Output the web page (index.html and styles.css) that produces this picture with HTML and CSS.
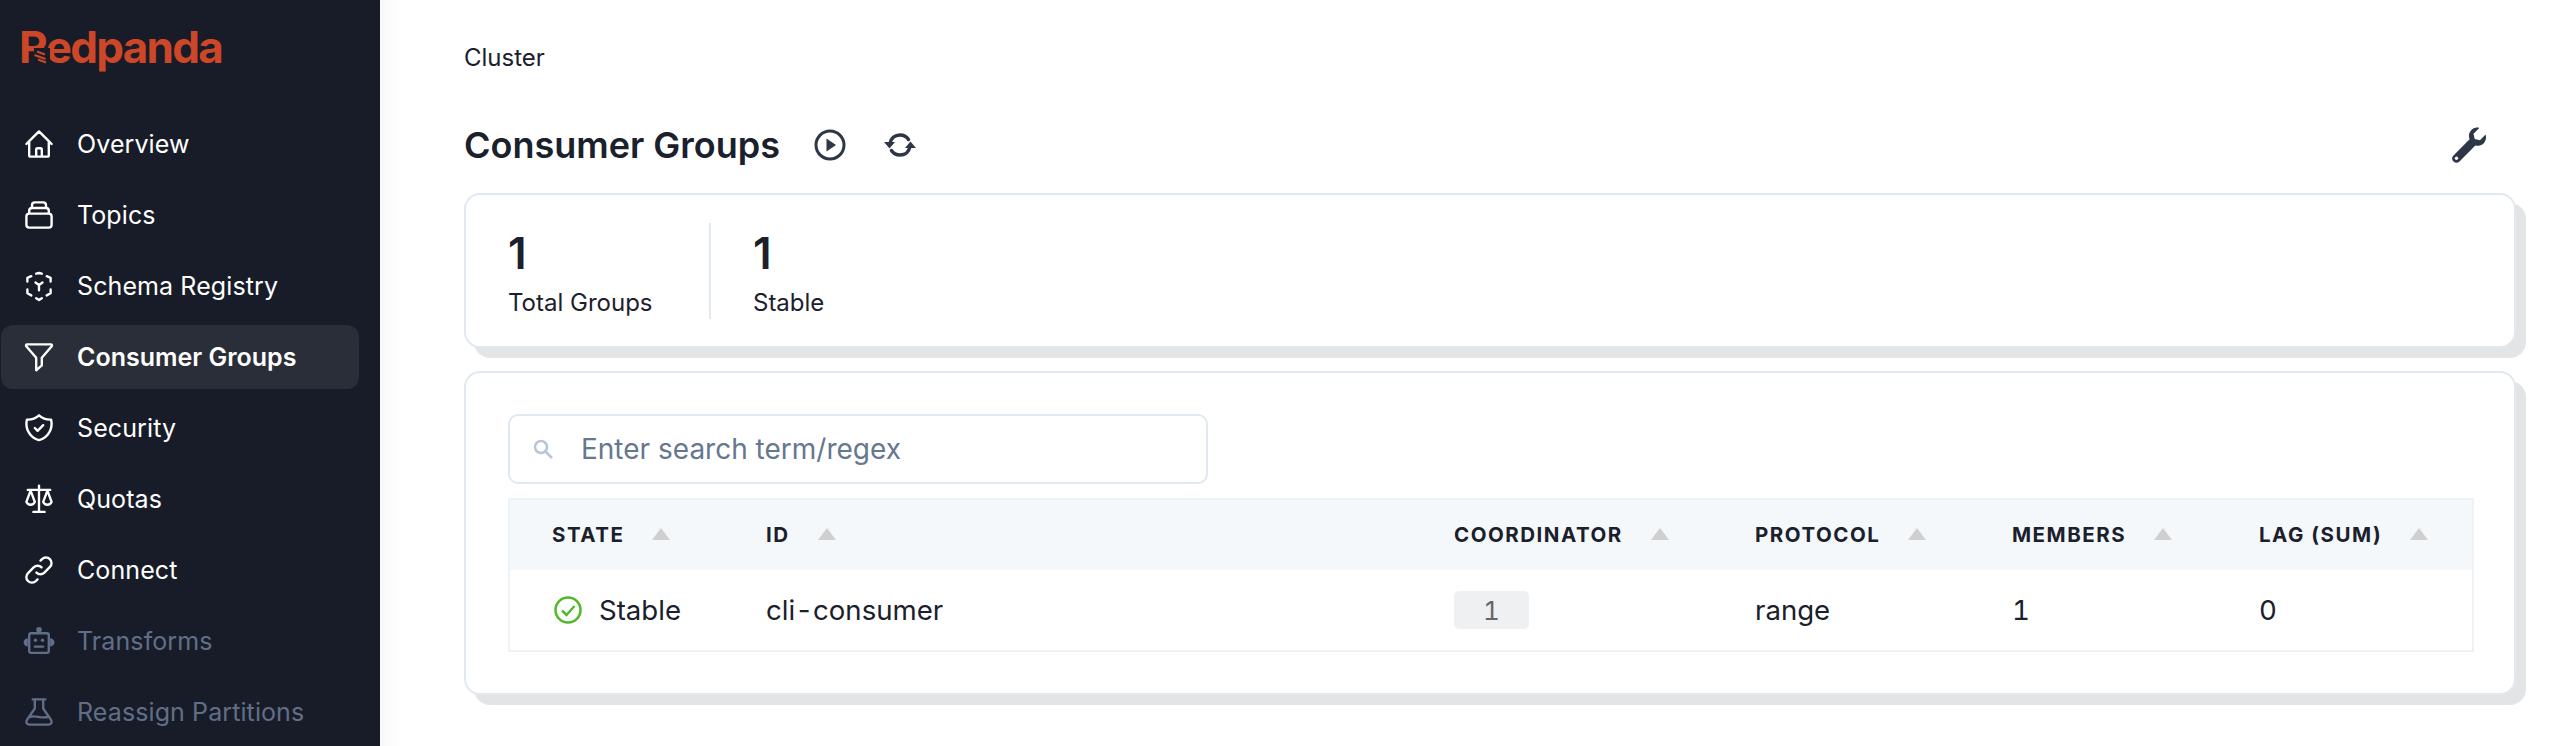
FILE: index.html
```html
<!DOCTYPE html>
<html lang="en">
<head>
<meta charset="utf-8">
<title>Consumer Groups</title>
<link rel="stylesheet" href="styles.css">
</head>
<body>
<div class="app">
  <aside class="sidebar">
    <div class="logo">
      <span class="logo-text">Redpanda</span>
      <svg class="logo-stripes" viewBox="0 0 19 16"><rect class="patch" x="3" y="0" width="16" height="16"/><path d="M6 3.500l8 3M3.500 7l11 4M7 11.500l8 3"/></svg>
    </div>
    <nav class="nav">
      <a class="nav-item"><svg class="nav-icon" viewBox="2 2 20 20"><path d="M3 12l2-2m0 0l7-7 7 7M5 10v10a1 1 0 001 1h3m10-11l2 2m-2-2v10a1 1 0 01-1 1h-3m-6 0a1 1 0 001-1v-4a1 1 0 011-1h2a1 1 0 011 1v4a1 1 0 001 1m-6 0h6"/></svg>Overview</a>
      <a class="nav-item"><svg class="nav-icon" viewBox="2 2 20 20"><path d="M19 11H5m14 0a2 2 0 012 2v6a2 2 0 01-2 2H5a2 2 0 01-2-2v-6a2 2 0 012-2m14 0V9a2 2 0 00-2-2M5 11V9a2 2 0 012-2m0 0V5a2 2 0 012-2h6a2 2 0 012 2v2M7 7h10"/></svg>Topics</a>
      <a class="nav-item"><svg class="nav-icon" viewBox="2 2 20 20"><path d="M10 3.200L12 2.700l2 .5M17.500 5l2.800 1.200v2.600M20.300 14.500v2.700l-2.800 1.500M14 20.700l-2 1.300-2-1.300M6.500 18.700l-2.800-1.500v-2.700M3.700 8.800V6.200L6.500 5M9.500 9.500l2.500 1.800 2.500-1.800M12 11.300V15"/></svg>Schema Registry</a>
      <a class="nav-item active"><svg class="nav-icon" viewBox="2 2 20 20"><path d="M3.500 3h17a.8.8 0 01.6 1.300L14 12.500V18l-4 3.500v-9L2.900 4.300A.8.8 0 013.500 3z"/></svg>Consumer Groups</a>
      <a class="nav-item"><svg class="nav-icon" viewBox="2 2 20 20"><path d="M9 12l2 2 4-4m5.618-4.016A11.955 11.955 0 0112 2.944a11.955 11.955 0 01-8.618 3.040A12.020 12.020 0 003 9c0 5.591 3.824 10.290 9 11.622 5.176-1.332 9-6.030 9-11.622 0-1.042-.133-2.052-.382-3.016z"/></svg>Security</a>
      <a class="nav-item"><svg class="nav-icon" viewBox="2 2 20 20"><path d="M12 2.500v18.500M8 21.200h8M4 5.500h16M6 6L3 14a3.200 3.200 0 006 0L6 6zM18 6l-3 8a3.200 3.200 0 006 0L18 6z"/></svg>Quotas</a>
      <a class="nav-item"><svg class="nav-icon" viewBox="2 2 20 20"><path d="M13.828 10.172a4 4 0 00-5.656 0l-4 4a4 4 0 105.656 5.656l1.102-1.101m-.758-4.899a4 4 0 005.656 0l4-4a4 4 0 00-5.656-5.656l-1.100 1.100"/></svg>Connect</a>
      <a class="nav-item disabled"><svg class="nav-icon" viewBox="2 2 20 20"><path d="M6.500 6.500h11A1.500 1.500 0 0119 8v11a1.500 1.500 0 01-1.500 1.500h-11A1.500 1.500 0 015 19V8a1.500 1.500 0 011.500-1.500zM9 16h6"/><circle class="solid" cx="12" cy="4" r="2"/><path class="solid" d="M4 10a3 3 0 00-3 3 3 3 0 003 3zM20 10a3 3 0 013 3 3 3 0 01-3 3z"/><circle class="solid" cx="9.500" cy="11.500" r="1.200"/><circle class="solid" cx="14.500" cy="11.500" r="1.200"/></svg>Transforms</a>
      <a class="nav-item disabled"><svg class="nav-icon" viewBox="2 2 20 20"><path d="M7.500 3h9M9 3v6.500L3.500 17.500c-1.200 1.800-.4 3.500 2 3.500h13c2.400 0 3.200-1.700 2-3.500L15 9.500V3M5.500 15.500c4-1.500 8 1.500 13 0"/></svg>Reassign Partitions</a>
    </nav>
  </aside>
  <main class="main">
    <div class="breadcrumb">Cluster</div>
    <header class="title-row">
      <h1 class="title">Consumer Groups</h1>
      <svg class="tool play" viewBox="0 0 32 32"><circle cx="16" cy="16" r="14"/><path class="solid" d="M12.500 9.500L22 16l-9.500 6.500z"/></svg>
      <svg class="tool sync" viewBox="0 0 32 32"><path d="M6 14.500C7 9 11 6 16 6c3.500 0 6.500 1.500 8.500 4.500M26 17.500C25 23 21 26 16 26c-3.500 0-6.500-1.500-8.500-4.500"/><path class="solid" d="M0 13h11L5.500 19.500zM21 19h11L26.500 12.500z"/></svg>
      <svg class="wrench" viewBox="0 0 34 36"><path d="M25 .5c-4.800.3-8.300 4.300-8 9 .1 1 .3 2 .6 2.800L1.500 28.400a4.300 4.300 0 000 6 4.300 4.300 0 006 0l15.800-16c1 .3 2 .4 3 .3 4.500-.4 7.800-4.100 7.700-8.700 0-.9-.2-1.700-.4-2.400l-5.700 5.600-5.200-1.300-1.200-5.200L27.300.9C26.600.6 25.800.4 25 .5z"/><circle class="hole" cx="4.500" cy="31.300" r="1.700"/></svg>
    </header>
    <section class="card stats">
      <div class="stat"><div class="stat-value">1</div><div class="stat-label">Total Groups</div></div>
      <div class="stat second"><div class="stat-value">1</div><div class="stat-label">Stable</div></div>
    </section>
    <section class="card list">
      <div class="search">
        <svg class="search-icon" viewBox="0 0 20 20"><circle cx="8" cy="8" r="6"/><path d="M12.500 12.500L19 19"/></svg>
        <span class="placeholder">Enter search term/regex</span>
      </div>
      <div class="table">
        <div class="row head">
          <div class="cell">STATE<i class="sort"></i></div>
          <div class="cell">ID<i class="sort"></i></div>
          <div class="cell">COORDINATOR<i class="sort"></i></div>
          <div class="cell">PROTOCOL<i class="sort"></i></div>
          <div class="cell">MEMBERS<i class="sort"></i></div>
          <div class="cell">LAG (SUM)<i class="sort"></i></div>
        </div>
        <div class="row body">
          <div class="cell state"><svg class="check" viewBox="0 0 28 28"><circle cx="14" cy="14" r="12.500"/><path d="M8 14.500l4.500 4.500L20.500 10"/></svg>Stable</div>
          <div class="cell">cli-consumer</div>
          <div class="cell"><span class="tag">1</span></div>
          <div class="cell">range</div>
          <div class="cell">1</div>
          <div class="cell">0</div>
        </div>
      </div>
    </section>
  </main>
</div>
</body>
</html>
```

FILE: styles.css
```css
* { box-sizing: border-box; }
html, body { margin: 0; height: 100%; overflow: hidden; }
body { font-family: Inter, "Liberation Sans", sans-serif; color: #1a202c; background: #fff; }
.app { display: flex; height: 746px; }

.sidebar { width: 380px; flex: none; background: #181c28; padding-top: 24px; overflow: hidden; }
.logo { position: relative; height: 76px; padding-left: 19px; }
.logo-text { font-size: 44px; line-height: 47px; font-weight: 700; letter-spacing: -1.700px; color: #cc4628; display: block; }
.logo-stripes { position: absolute; left: 31px; top: 24px; width: 19px; height: 16px; fill: none; stroke: #cc4628; stroke-width: 2.200; }
.logo-stripes .patch { fill: #181c28; stroke: none; }
.nav { padding-top: 8px; }
.nav-item { display: flex; align-items: center; gap: 24px; height: 71px; margin-left: 1px; width: 358px; padding-left: 24px; font-size: 25px; letter-spacing: .1px; color: #fff; border-radius: 12px; }
.nav-item.active { height: 64px; margin: 3.500px 0 3.500px 1px; font-weight: 600; letter-spacing: 0; background: #2a2e39; }
.nav-item.disabled { color: #606f87; }
.nav-icon { width: 28px; height: 28px; flex: none; overflow: visible; fill: none; stroke: currentColor; stroke-width: 1.700; stroke-linecap: round; stroke-linejoin: round; }
.nav-icon .solid { fill: currentColor; stroke: none; }

.main { flex: 1; min-width: 0; padding: 44px 34px 0 84px; background: linear-gradient(90deg, #f8f8f8, #fff 22px); }
.breadcrumb { font-size: 24px; line-height: 28px; }
.title-row { display: flex; align-items: center; height: 64px; margin-top: 41px; }
.title { margin: 0 34px 0 0; font-size: 36px; line-height: 44px; font-weight: 600; }
.tool { width: 32px; height: 32px; flex: none; fill: none; stroke: #2d3748; stroke-width: 3; stroke-linecap: round; }
.tool .solid { fill: #2d3748; stroke: none; }
.play { margin-right: 38px; }
.sync { stroke-width: 3.500; }
.wrench { width: 34px; height: 36px; margin-left: auto; margin-right: 30px; fill: #2d3748; }
.wrench .hole { fill: #fff; }

.card { background: #fff; border: 2px solid #e2e8f0; border-radius: 16px; box-shadow: 10px 10px 0 #e3e4e6; }
.stats { display: flex; height: 155px; margin-top: 16px; padding: 28px 42px; }
.stat { width: 201px; height: 96px; }
.stat.second { width: auto; border-left: 2px solid #e2e8f0; padding-left: 42px; }
.stat-value { font-size: 44px; line-height: 60px; font-weight: 600; }
.stat-label { font-size: 24px; line-height: 40px; }

.list { height: 324px; margin-top: 23px; padding: 41px 40px 0 42px; }
.search { display: flex; align-items: center; width: 700px; height: 70px; border: 2px solid #e2e8f0; border-radius: 10px; padding-left: 23px; }
.search-icon { width: 20px; height: 20px; flex: none; fill: none; stroke: #b8c5d6; stroke-width: 2.500; margin-right: 28px; }
.placeholder { font-size: 28px; color: #667790; }
.table { margin-top: 14px; border: 2px solid #edf2f7; }
.row { display: grid; grid-template-columns: 214px 688px 301px 257px 247px 255px; }
.cell { display: flex; align-items: center; padding-left: 42px; }
.head { height: 70px; background: #f5f8fb; font-size: 20.500px; font-weight: 700; letter-spacing: 1.500px; }
.head .cell { padding-bottom: 2px; }
.sort { width: 0; height: 0; margin-left: 28px; border-left: 9px solid transparent; border-right: 9px solid transparent; border-bottom: 12px solid #cfcfcf; }
.body { height: 80px; font-size: 27.600px; font-variant-numeric: tabular-nums; }
.state { gap: 17px; padding-left: 44px; }
.check { width: 28px; height: 28px; flex: none; fill: none; stroke: #52b82a; stroke-width: 2.500; }
.tag { display: flex; justify-content: center; width: 75px; height: 38px; line-height: 40px; border-radius: 5px; background: #eff0f2; color: #666; font-size: 26px; }
```
